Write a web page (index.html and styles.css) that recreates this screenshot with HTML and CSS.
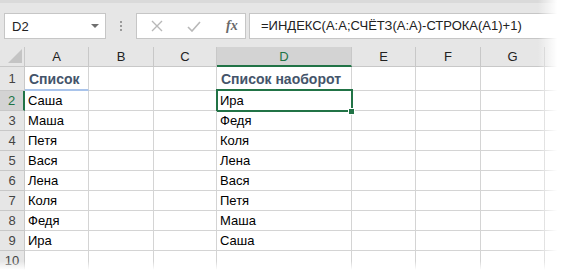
FILE: index.html
```html
<!DOCTYPE html>
<html lang="ru">

<head>
    <meta charset="UTF-8">
    <meta name="viewport" content="width=device-width, initial-scale=1.0">
    <title>Список наоборот</title>
    <link rel="stylesheet" href="styles.css">
</head>

<body>
    <div class="window">
        <div class="toolbar">
            <div class="namebox">
                <span>D2</span>
                <span class="arrow"></span>
            </div>
            <div class="dots"><i></i><i></i><i></i></div>
            <div class="fxbox">
                <svg class="icon" width="12" height="12" viewBox="0 0 12 12">
                    <path d="M1 1 L11 11 M11 1 L1 11" stroke="#b8b8b8" stroke-width="1.4" fill="none"/>
                </svg>
                <svg class="icon" width="14" height="11" viewBox="0 0 14 11">
                    <path d="M1 6 L5 10 L13 1" stroke="#b8b8b8" stroke-width="1.6" fill="none"/>
                </svg>
                <span class="fx">fx</span>
            </div>
            <div class="formula">=ИНДЕКС(A:A;СЧЁТЗ(A:A)-СТРОКА(A1)+1)</div>
        </div>

        <div class="sheet">
            <div class="corner"><span class="tri"></span></div>
            <div class="colhead">A</div>
            <div class="colhead">B</div>
            <div class="colhead">C</div>
            <div class="colhead active">D</div>
            <div class="colhead">E</div>
            <div class="colhead">F</div>
            <div class="colhead">G</div>
            <div class="colhead"></div>

            <div class="rowhead tall">1</div>
            <div class="cell tall title under">Список</div>
            <div class="cell tall"></div>
            <div class="cell tall"></div>
            <div class="cell tall title">Список наоборот</div>
            <div class="cell tall"></div>
            <div class="cell tall"></div>
            <div class="cell tall"></div>
            <div class="cell tall"></div>

            <div class="rowhead active">2</div>
            <div class="cell">Саша</div>
            <div class="cell"></div>
            <div class="cell"></div>
            <div class="cell selected">Ира<span class="handle"></span></div>
            <div class="cell"></div>
            <div class="cell"></div>
            <div class="cell"></div>
            <div class="cell"></div>

            <div class="rowhead">3</div>
            <div class="cell">Маша</div>
            <div class="cell"></div>
            <div class="cell"></div>
            <div class="cell">Федя</div>
            <div class="cell"></div>
            <div class="cell"></div>
            <div class="cell"></div>
            <div class="cell"></div>

            <div class="rowhead">4</div>
            <div class="cell">Петя</div>
            <div class="cell"></div>
            <div class="cell"></div>
            <div class="cell">Коля</div>
            <div class="cell"></div>
            <div class="cell"></div>
            <div class="cell"></div>
            <div class="cell"></div>

            <div class="rowhead">5</div>
            <div class="cell">Вася</div>
            <div class="cell"></div>
            <div class="cell"></div>
            <div class="cell">Лена</div>
            <div class="cell"></div>
            <div class="cell"></div>
            <div class="cell"></div>
            <div class="cell"></div>

            <div class="rowhead">6</div>
            <div class="cell">Лена</div>
            <div class="cell"></div>
            <div class="cell"></div>
            <div class="cell">Вася</div>
            <div class="cell"></div>
            <div class="cell"></div>
            <div class="cell"></div>
            <div class="cell"></div>

            <div class="rowhead">7</div>
            <div class="cell">Коля</div>
            <div class="cell"></div>
            <div class="cell"></div>
            <div class="cell">Петя</div>
            <div class="cell"></div>
            <div class="cell"></div>
            <div class="cell"></div>
            <div class="cell"></div>

            <div class="rowhead">8</div>
            <div class="cell">Федя</div>
            <div class="cell"></div>
            <div class="cell"></div>
            <div class="cell">Маша</div>
            <div class="cell"></div>
            <div class="cell"></div>
            <div class="cell"></div>
            <div class="cell"></div>

            <div class="rowhead">9</div>
            <div class="cell">Ира</div>
            <div class="cell"></div>
            <div class="cell"></div>
            <div class="cell">Саша</div>
            <div class="cell"></div>
            <div class="cell"></div>
            <div class="cell"></div>
            <div class="cell"></div>

            <div class="rowhead">10</div>
            <div class="cell"></div>
            <div class="cell"></div>
            <div class="cell"></div>
            <div class="cell"></div>
            <div class="cell"></div>
            <div class="cell"></div>
            <div class="cell"></div>
            <div class="cell"></div>
        </div>

        <div class="fade-right"></div>
        <div class="fade-bottom"></div>
    </div>
</body>

</html>
```

FILE: styles.css
```css
* {
    margin: 0;
    padding: 0;
    box-sizing: border-box;
}

body {
    background: #ffffff;
    font-family: 'Liberation Sans', Arial, sans-serif;
    color: #000000;
    overflow: hidden;
}

.window {
    position: relative;
    width: 562px;
    height: 273px;
    overflow: hidden;
}

/* formula bar */
.toolbar {
    display: flex;
    align-items: center;
    height: 47px;
    padding: 0 0 0 4px;
    background: #e6e6e6;
    border-top: 3px solid #dadada;
}

.namebox {
    display: flex;
    align-items: center;
    justify-content: space-between;
    width: 102px;
    height: 26px;
    margin-top: 2px;
    padding: 0 6px 0 7px;
    background: #ffffff;
    border: 1px solid #c6c6c6;
    font-size: 13px;
    color: #222;
}

.arrow {
    width: 0;
    height: 0;
    border-left: 4px solid transparent;
    border-right: 4px solid transparent;
    border-top: 4px solid #6f6f6f;
}

.dots {
    display: flex;
    flex-direction: column;
    gap: 2px;
    width: 3px;
    margin: 2px 13px 0 14px;
}

.dots i {
    display: block;
    width: 2px;
    height: 2px;
    background: #9a9a9a;
}

.fxbox {
    display: flex;
    align-items: center;
    width: 110px;
    height: 26px;
    margin-top: 2px;
    padding: 0 0 0 14px;
    background: #ffffff;
    border: 1px solid #c6c6c6;
}

.fxbox .icon {
    margin-right: 24px;
}

.fx {
    font-family: 'Liberation Serif', serif;
    font-style: italic;
    font-weight: bold;
    font-size: 14px;
    color: #6a6a6a;
    margin-left: 1px;
}

.formula {
    flex: 1;
    height: 26px;
    margin: 2px 0 0 3px;
    padding: 4px 0 0 11px;
    background: #ffffff;
    border: 1px solid #c6c6c6;
    border-right: none;
    font-size: 13px;
    color: #222;
    white-space: nowrap;
}

/* grid */
.sheet {
    display: grid;
    grid-template-columns: 25px 64px 65px 63px 135px 64px 65px 64px 40px;
    grid-template-rows: 20px 24px repeat(9, 20px);
}

.corner,
.colhead,
.rowhead {
    background: #e6e6e6;
    border-right: 1px solid #c8c8c8;
    border-bottom: 1px solid #c8c8c8;
    color: #222;
}

.corner {
    position: relative;
}

.tri {
    position: absolute;
    right: 2px;
    bottom: 3px;
    width: 0;
    height: 0;
    border-left: 14px solid transparent;
    border-bottom: 14px solid #c4c4c4;
}

.colhead {
    display: flex;
    align-items: center;
    justify-content: center;
    font-size: 13px;
}

.colhead.active {
    background: #d3d3d3;
    border-bottom: 2px solid #217346;
    color: #217346;
}

.rowhead {
    display: flex;
    align-items: center;
    justify-content: center;
    font-size: 13px;
    color: #444;
}

.rowhead.active {
    background: #d3d3d3;
    border-right: 2px solid #217346;
    color: #217346;
}

.cell {
    position: relative;
    padding: 0 0 0 3px;
    border-right: 1px solid #d4d4d4;
    border-bottom: 1px solid #d4d4d4;
    font-size: 13px;
    line-height: 20px;
    white-space: nowrap;
}

.cell.tall {
    line-height: 24px;
}

.cell.title {
    font-size: 14px;
    font-weight: bold;
    color: #44546a;
    padding-left: 4px;
}

.cell.under {
    border-bottom: 2px solid #a9c4eb;
}

.cell.selected::after {
    content: "";
    position: absolute;
    left: -1px;
    top: -2px;
    right: -2px;
    bottom: -2px;
    border: 2px solid #217346;
}

.handle {
    position: absolute;
    right: -4px;
    bottom: -5px;
    width: 7px;
    height: 7px;
    background: #217346;
    border: 1px solid #ffffff;
    z-index: 2;
}

/* soft edges of the screenshot */
.fade-right {
    position: absolute;
    top: 0;
    right: 0;
    width: 24px;
    height: 100%;
    background: linear-gradient(to right, rgba(255, 255, 255, 0), #ffffff 80%);
}

.fade-bottom {
    position: absolute;
    left: 0;
    bottom: 0;
    width: 100%;
    height: 12px;
    background: linear-gradient(to bottom, rgba(255, 255, 255, 0), #ffffff 75%);
}
```
